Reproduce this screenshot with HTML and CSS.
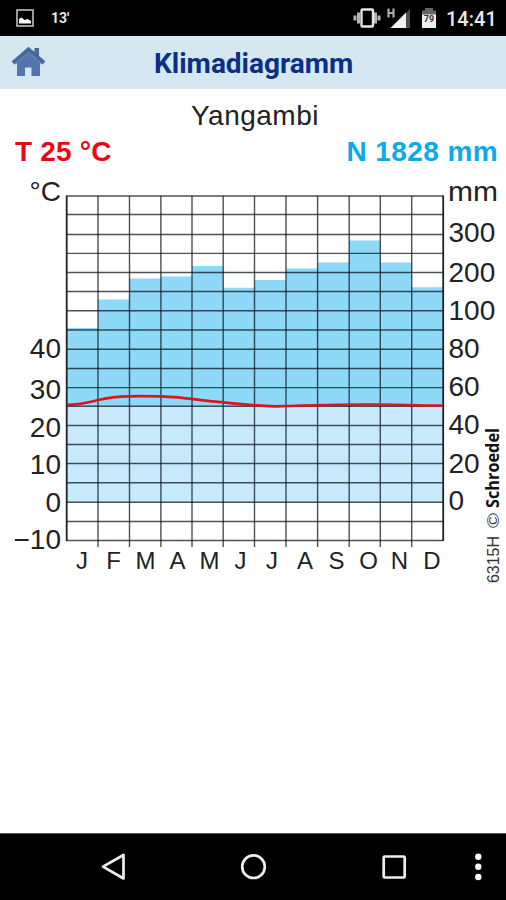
FILE: index.html
```html
<!DOCTYPE html>
<html lang="de">
<head>
    <meta charset="UTF-8">
    <title>Klimadiagramm</title>
    <link rel="stylesheet" href="styles.css">
</head>
<body>

<div class="status-bar">
    <svg class="picture-icon" width="18" height="18" viewBox="0 0 18 18">
        <rect x="1" y="1" width="16" height="16" fill="none" stroke="#b5b5b5" stroke-width="1.7"/>
        <path d="M3 14.500V10l2.500-1.500 3 2.500 3-1 3.500 2v2.500z" fill="#fff"/>
    </svg>
    <span class="temperature">13'</span>
    <svg class="system-icons" width="88" height="26" viewBox="352 5 88 26">
        <path d="M355 15.500v5M358.500 12.500v11M375.500 12.500v11M379 15.500v5" stroke="#b4b4b4" stroke-width="3"/>
        <rect x="361.500" y="9.500" width="11.500" height="17" rx="1" fill="#000" stroke="#e6e6e6" stroke-width="2.400"/>
        <path d="M388.500 8.500v9M393.500 8.500v9M388 13h5.500" stroke="#aaa" stroke-width="2.200"/>
        <path d="M390.500 28l15.500-15.500v15.500z" fill="#f2f2f2"/>
        <path d="M406 13l4-4v19h-4z" fill="#4d4d4d"/>
        <path d="M422 13v-2.500h3V8h8v2.500h3V15h-14z" fill="#666"/>
        <path d="M422 14.500h14v13.500h-14z" fill="#eee"/>
        <text x="429" y="22" class="battery-level">79</text>
    </svg>
    <span class="clock">14:41</span>
</div>

<div class="header">
    <svg class="home-icon" width="34" height="32" viewBox="0 0 34 32">
        <path d="M23.500 2h4.500v9l-4.500-4z" fill="#47699f"/>
        <path d="M17 6L6 16.500V30h8v-8.500h6.500V30H29V16.500z" fill="#5275ae"/>
        <path d="M2 17L17.500 3.500 33 17" fill="none" stroke="#46699f" stroke-width="4.200"/>
        <path d="M4.500 18L17.500 7 30.500 18" fill="none" stroke="#6587b9" stroke-width="1"/>
    </svg>
    <h1>Klimadiagramm</h1>
</div>

<div class="content">
    <h2>Yangambi</h2>
    <div class="averages">
        <span class="temp">T 25 °C</span>
        <span class="rain">N 1828 mm</span>
    </div>

    <svg class="chart" width="506" height="420" viewBox="0 170 506 420">
        <!-- precipitation -->
        <path class="bars" d="M66.500 406V328H98V299.500H129.300V278.500H160.700V276.500H192V266H223.300V287.700H254.700V280H286V268.500H317.500V262.500H348.800V240.500H380.300V262.500H411.700V287.300H443V406z"/>
        <rect class="base" x="66.500" y="406" width="376.500" height="96"/>

        <!-- grid -->
        <path class="grid" d="M66.500 196H443M66.500 214.500H443M66.500 234.500H443M66.500 253.400H443M66.500 272.500H443M66.500 291.500H443M66.500 310.700H443M66.500 330H443M66.500 349.300H443M66.500 368.500H443M66.500 387.600H443M66.500 406.300H443M66.500 425.500H443M66.500 444.500H443M66.500 463.500H443M66.500 482.800H443M66.500 502.200H443M66.500 521.500H443M66.500 540.500H443"/>
        <path class="grid" d="M98 196V547M129.500 196V547M160.900 196V547M192 196V547M223.200 196V547M254.500 196V547M286 196V547M317.600 196V547M349.200 196V547M380.300 196V547M411.700 196V547"/>
        <path class="frame" d="M66.700 195.500V541M443.200 195.500V541"/>

        <!-- temperature -->
        <path class="curve" d="M67 404.800C80 405 90 402 98 400C110 397 118 396.500 130 396.300C150 396 165 396.500 178 397.300C195 399 208 401.300 223 402.300C240 404 255 405.800 275 406.300C300 405.500 335 404.500 370 404.500C395 404.500 415 405.500 443 405.500"/>

        <g class="axis left">
            <text x="61" y="201">°C</text>
            <text x="61" y="358">40</text>
            <text x="61" y="399">30</text>
            <text x="61" y="437">20</text>
            <text x="61" y="474">10</text>
            <text x="61" y="511.500">0</text>
            <text x="61" y="549">−10</text>
        </g>
        <g class="axis">
            <text x="448" y="201" textLength="50" lengthAdjust="spacingAndGlyphs">mm</text>
            <text x="448.500" y="242">300</text>
            <text x="448.500" y="282">200</text>
            <text x="448.500" y="320">100</text>
            <text x="448.500" y="358">80</text>
            <text x="448.500" y="396">60</text>
            <text x="448.500" y="434">40</text>
            <text x="448.500" y="472.500">20</text>
            <text x="448.500" y="510">0</text>
        </g>
        <g class="months">
            <text x="82" y="569">J</text>
            <text x="113.500" y="569">F</text>
            <text x="145.500" y="569">M</text>
            <text x="177.500" y="569">A</text>
            <text x="209.500" y="569">M</text>
            <text x="240.500" y="569">J</text>
            <text x="272" y="569">J</text>
            <text x="305" y="569">A</text>
            <text x="336.500" y="569">S</text>
            <text x="368.500" y="569">O</text>
            <text x="399.500" y="569">N</text>
            <text x="432" y="569">D</text>
        </g>
        <g transform="translate(498.500 583) rotate(-90)">
            <text class="number" x="0" y="0" textLength="47" lengthAdjust="spacingAndGlyphs">6315H</text>
            <text class="number" x="55" y="0" textLength="15" lengthAdjust="spacingAndGlyphs">©</text>
            <text class="publisher" x="75" y="0" textLength="80" lengthAdjust="spacingAndGlyphs">Schroedel</text>
        </g>
    </svg>
</div>

<div class="nav-bar">
    <svg width="506" height="66" viewBox="0 834 506 66">
        <path d="M103 866.700L123.500 855v23.500z"/>
        <circle cx="253.500" cy="866.700" r="11.300"/>
        <rect x="383.700" y="856.500" width="21" height="21" rx="1"/>
        <g class="dots">
            <circle cx="478.300" cy="856.700" r="3.200"/>
            <circle cx="478.300" cy="866.800" r="3.200"/>
            <circle cx="478.300" cy="877" r="3.200"/>
        </g>
    </svg>
</div>

</body>
</html>
```

FILE: styles.css
```css
body {
    margin: 0;
    height: 900px;
    display: flex;
    flex-direction: column;
    overflow: hidden;
    background: #fff;
    font-family: "Liberation Sans", Arial, sans-serif;
}

.status-bar {
    box-sizing: border-box;
    height: 36px;
    padding: 0 11px 0 16px;
    display: flex;
    align-items: center;
    background: #000;
    color: #e8e8e8;
    font-family: Roboto, sans-serif;
}

.temperature {
    margin-left: 17px;
    font-size: 14px;
    font-weight: 700;
}

.system-icons {
    margin-left: auto;
}

.battery-level {
    font-size: 9px;
    font-weight: 700;
    text-anchor: middle;
    fill: #333;
}

.clock {
    width: 49px;
    margin-left: 6px;
    padding-top: 2px;
    font-size: 20px;
    font-weight: 500;
    white-space: nowrap;
}

.header {
    box-sizing: border-box;
    height: 53px;
    padding-left: 11px;
    display: flex;
    align-items: center;
    background: #d5e7f1;
}

.home-icon {
    margin-top: -2px;
}

.header h1 {
    margin: 2px 0 0 109px;
    color: #0b2f87;
    font-family: Roboto, sans-serif;
    font-size: 28px;
    font-weight: 700;
    line-height: 32px;
}

.content {
    flex: 1;
}

.content h2 {
    margin: 11px 0 0;
    padding-left: 4px;
    color: #222;
    font-size: 28px;
    font-weight: 400;
    letter-spacing: 0.5px;
    line-height: 32px;
    text-align: center;
}

.averages {
    height: 38px;
    padding: 0 8px 0 15px;
    display: flex;
    justify-content: space-between;
    font-size: 28px;
    font-weight: 700;
    line-height: 39px;
}

.temp {
    color: #e60a14;
    letter-spacing: 0.2px;
}

.rain {
    color: #0da9e8;
    letter-spacing: 0.4px;
}

.chart {
    display: block;
}

.bars {
    fill: #8ed8f8;
}

.base {
    fill: #c6eafc;
}

.grid {
    fill: none;
    stroke: #101820;
    stroke-opacity: 0.75;
    stroke-width: 1.4;
}

.frame {
    fill: none;
    stroke: #222;
    stroke-width: 1.8;
}

.curve {
    fill: none;
    stroke: #dc1420;
    stroke-width: 2.7;
}

.axis {
    fill: #222;
    font-size: 28px;
}

.left {
    text-anchor: end;
}

.months {
    fill: #222;
    font-size: 24px;
    text-anchor: middle;
}

.number {
    fill: #333;
    font-size: 16px;
}

.publisher {
    fill: #111;
    font-family: "Open Sans", sans-serif;
    font-size: 17px;
    font-weight: 700;
}

.nav-bar {
    height: 66px;
    background: #000;
    border-top: 1px solid #555;
}

.nav-bar svg {
    display: block;
    fill: none;
    stroke: #eee;
    stroke-width: 2.7;
    stroke-linejoin: round;
}

.nav-bar .dots {
    fill: #fff;
    stroke: none;
}
```
